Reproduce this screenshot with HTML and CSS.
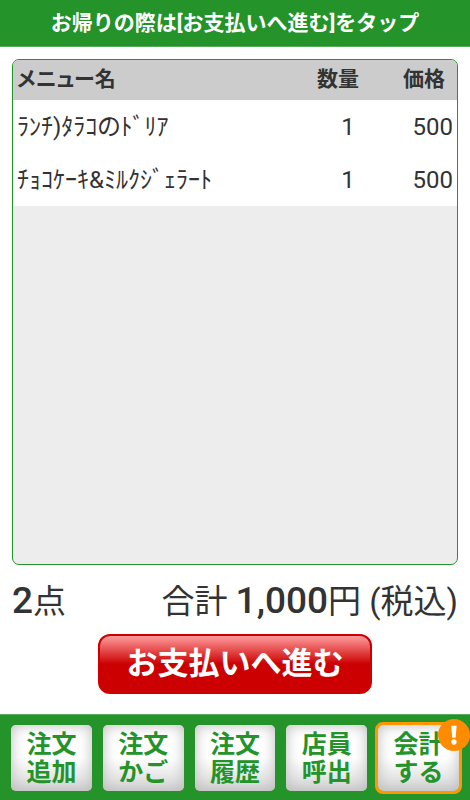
FILE: index.html
```html
<!DOCTYPE html>
<html lang="ja">
<head>
<meta charset="utf-8">
<meta name="viewport" content="width=device-width, initial-scale=1">
<title>注文履歴</title>
<link rel="stylesheet" href="styles.css">
</head>
<body>
<header class="notice">お帰りの際は[お支払いへ進む]をタップ</header>
<main class="content">
  <section class="order">
    <table class="order-table">
      <thead>
        <tr><th class="name" scope="col">メニュー名</th><th class="count" scope="col">数量</th><th class="price" scope="col">価格</th></tr>
      </thead>
      <tbody>
        <tr><td class="name">ﾗﾝﾁ)ﾀﾗｺのﾄﾞﾘｱ</td><td class="count">1</td><td class="price">500</td></tr>
        <tr><td class="name">ﾁｮｺｹｰｷ&amp;ﾐﾙｸｼﾞｪﾗｰﾄ</td><td class="count">1</td><td class="price">500</td></tr>
      </tbody>
    </table>
  </section>
  <div class="totals">
    <div><span class="number">2</span>点</div>
    <div>合計 <span class="number">1,000</span>円 (税込)</div>
  </div>
  <button class="pay" type="button">お支払いへ進む</button>
</main>
<nav class="tabs">
  <button class="tab" type="button">注文<br>追加</button>
  <button class="tab" type="button">注文<br>かご</button>
  <button class="tab" type="button">注文<br>履歴</button>
  <button class="tab" type="button">店員<br>呼出</button>
  <button class="tab tab-active" type="button">会計<br>する<span class="badge"><svg viewBox="0 0 32 32" aria-hidden="true"><circle cx="16" cy="16" r="16"/><path d="M13.2 6.8h5.4l-1 12h-3.4z"/><circle class="dot" cx="15.9" cy="23" r="2.7"/></svg></span></button>
</nav>
</body>
</html>
```

FILE: styles.css
```css
* {
  box-sizing: border-box;
}

body {
  margin: 0;
  min-height: 100vh;
  display: flex;
  flex-direction: column;
  background: #fff;
  color: #333;
  font-family: Roboto, "Noto Sans CJK JP", sans-serif;
}

button {
  font-family: inherit;
  font-weight: 700;
  border: 0;
  padding: 0;
}

.notice {
  padding: 8px 0 7px;
  background: #23932a;
  border-bottom: 1px solid #56ac5b;
  color: #fff;
  font-size: 21px;
  font-weight: 700;
  line-height: 31px;
  text-align: center;
}

.content {
  flex: 1;
  display: flex;
  flex-direction: column;
  padding: 12px 12px 20px;
}

.order {
  flex: 1;
  overflow: hidden;
  border: 1px solid #23932a;
  border-radius: 7px;
  background: #ededed;
}

.order-table {
  width: 100%;
  border-collapse: collapse;
  table-layout: fixed;
}

.order-table th {
  height: 40px;
  padding: 0 0 2px;
  background: #ccc;
  font-size: 21px;
  line-height: 30px;
}

.order-table td {
  height: 53px;
  padding: 0;
  background: #fff;
  font-size: 24px;
  line-height: 36px;
}

.order-table .name {
  padding-left: 4px;
  text-align: left;
  white-space: nowrap;
  font-feature-settings: "palt";
}

.order-table .count {
  width: 70px;
  text-align: center;
}

.order-table td.count {
  padding-left: 20px;
}

.order-table .price {
  width: 84px;
  padding-right: 4px;
  text-align: right;
}

.order-table th.price {
  padding-right: 12px;
}

.totals {
  display: flex;
  justify-content: space-between;
  padding-top: 12px;
  font-size: 33px;
  line-height: 48px;
}

.number {
  font-size: 37px;
  font-weight: 500;
}

.pay {
  align-self: center;
  width: 274px;
  max-width: 100%;
  height: 60px;
  margin-top: 8px;
  padding-bottom: 1px;
  border: 2px solid #c00;
  border-radius: 12px;
  background: linear-gradient(#ff9c9c, #c00 50%);
  color: #fff;
  font-size: 31px;
  line-height: 46px;
}

.tabs {
  display: grid;
  grid-template-columns: repeat(5, 1fr);
  gap: 11px;
  padding: 10px 11px 9px;
  background: #23932a;
  border-top: 1px solid #56ac5b;
}

.tab {
  position: relative;
  height: 66px;
  padding-top: 2px;
  border-radius: 5px;
  background: linear-gradient(#fff 50%, #d4d4d4);
  box-shadow: inset 0 0 14px #bbb;
  color: #23932a;
  font-size: 25px;
  line-height: 28px;
}

.tab-active {
  outline: 3px solid #ff9800;
}

.badge {
  position: absolute;
  top: -6px;
  right: -11px;
  width: 32px;
  height: 32px;
}

.badge svg {
  display: block;
  fill: #ff8c00;
}

.badge path,
.badge .dot {
  fill: #fff;
}
```
